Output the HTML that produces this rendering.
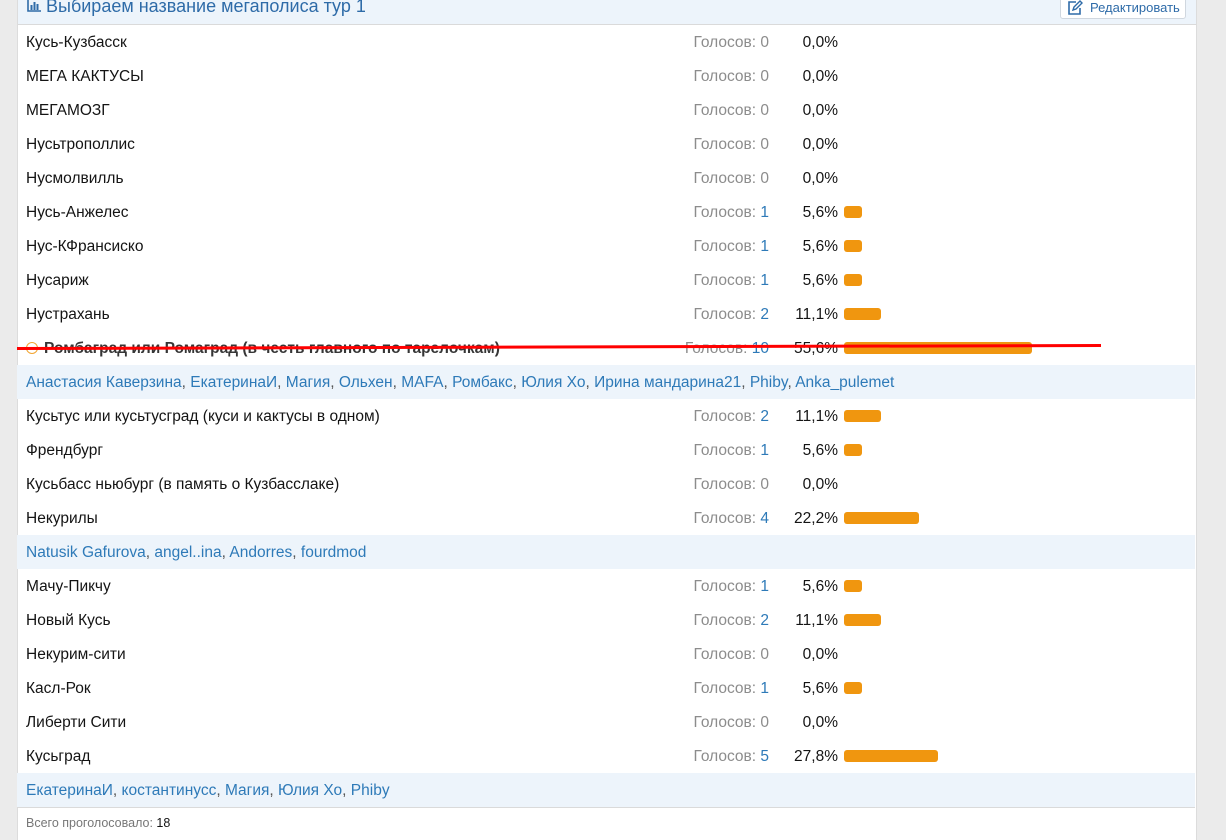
<!DOCTYPE html>
<html><head><meta charset="utf-8"><style>
body{margin:0;width:1226px;height:831px;background:#ebebeb;font-family:"Liberation Sans",sans-serif;font-size:15.5px;color:#141414;overflow:hidden;position:relative}
.panel{position:absolute;left:17px;top:-10px;width:1178px;height:850px;background:#fff;border-left:1px solid #dcdcdc;border-right:1px solid #dcdcdc}
.hdr{position:absolute;left:0;top:0;width:1178px;height:34px;background:#edf4fb;border-bottom:1px solid #dadada}
.hdr .t{position:absolute;left:9px;top:6px;font-size:18px;color:#2e6ba8}
.btn{position:absolute;left:1042px;top:6px;width:124px;height:21px;border:1px solid #d0d7df;border-radius:3px;background:#fff;color:#2e6ba8;font-size:13px;line-height:22px}
.row{position:absolute;left:0;width:1178px;height:34px;line-height:34px}
.row .n{position:absolute;left:9px}
.row .v{position:absolute;right:426px;color:#8c8c8c}
.row .v b{font-weight:normal;color:#2e7ab8}
.row .p{position:absolute;right:357px}
.row .bar{position:absolute;left:827px;top:9px;height:12px;background:#f0960f;border-radius:3px}
.vs{position:absolute;left:0;width:1178px;height:34px;line-height:34px;background:#edf4fb;color:#2e7ab8}
.vs span{padding-left:9px}
.vs i{font-style:normal;color:#555}
.foot{position:absolute;left:9px;font-size:12.5px;color:#777}
</style></head><body>
<div class="panel">
<div class="hdr"><div class="t"><svg width="14" height="13" viewBox="0 0 14 13" style="vertical-align:0"><path d="M1 0v12h13" stroke="#2e6ba8" stroke-width="1.6" fill="none"/><rect x="3.5" y="6" width="2" height="5" fill="#2e6ba8"/><rect x="6.5" y="3" width="2" height="8" fill="#2e6ba8"/><rect x="9.5" y="5" width="2" height="6" fill="#2e6ba8"/></svg> Выбираем название мегаполиса тур 1</div>
<div class="btn"><svg width="16" height="15" viewBox="0 0 16 15" style="position:absolute;left:6px;top:3px"><path d="M9 2H2v12h11V8" stroke="#2e6ba8" stroke-width="1.6" fill="none"/><path d="M6 10l1-3 6-6 2 2-6 6z" stroke="#2e6ba8" stroke-width="1.4" fill="none"/></svg><span style="position:absolute;left:29px">Редактировать</span></div>
</div>
</div>
<div id="rows" style="position:absolute;left:17px;top:0;width:1178px;height:831px"></div>
<div style="position:absolute;left:17px;top:347px;width:1084px;height:3px;background:#f00;transform:rotate(-0.16deg);transform-origin:0 50%"></div>
<script>
var d=[["Кусь-Кузбасск",0,"0,0%",0],["МЕГА КАКТУСЫ",0,"0,0%",0],["МЕГАМОЗГ",0,"0,0%",0],["Нусьтрополлис",0,"0,0%",0],["Нусмолвилль",0,"0,0%",0],["Нусь-Анжелес",1,"5,6%",18],["Нус-КФрансиско",1,"5,6%",18],["Нусариж",1,"5,6%",18],["Нустрахань",2,"11,1%",37],["Ромбаград или Ромаград (в честь главного по тарелочкам)",10,"55,6%",188,1],
["V","Анастасия Каверзина<i>, </i>ЕкатеринаИ<i>, </i>Магия<i>, </i>Ольхен<i>, </i>MAFA<i>, </i>Ромбакс<i>, </i>Юлия Хо<i>, </i>Ирина мандарина21<i>, </i>Phiby<i>, </i>Anka_pulemet"],
["Кусьтус или кусьтусград (куси и кактусы в одном)",2,"11,1%",37],["Френдбург",1,"5,6%",18],["Кусьбасс ньюбург (в память о Кузбасслаке)",0,"0,0%",0],["Некурилы",4,"22,2%",75],
["V","Natusik Gafurova<i>, </i>angel..ina<i>, </i>Andorres<i>, </i>fourdmod"],
["Мачу-Пикчу",1,"5,6%",18],["Новый Кусь",2,"11,1%",37],["Некурим-сити",0,"0,0%",0],["Касл-Рок",1,"5,6%",18],["Либерти Сити",0,"0,0%",0],["Кусьград",5,"27,8%",94],
["V","ЕкатеринаИ<i>, </i>костантинусс<i>, </i>Магия<i>, </i>Юлия Хо<i>, </i>Phiby"]];
var h="";d.forEach(function(r,i){var y=25+34*i;
if(r[0]=="V"){h+='<div class="vs" style="top:'+y+'px;line-height:36px"><span>'+r[1]+'</span></div>';return;}
var n=r[4]?'<b style="opacity:.85"><span style="display:inline-block;width:12px;height:12px;border:1.5px solid #f0960f;border-radius:50%;box-sizing:border-box;vertical-align:-1px;margin-right:6px"></span>'+r[0]+'</b>':r[0];
h+='<div class="row" style="top:'+y+'px;line-height:36px"><span class="n">'+n+'</span><span class="v">Голосов: '+(r[1]?'<b>'+r[1]+'</b>':r[1])+'</span><span class="p">'+r[2]+'</span>'+(r[3]?'<div class="bar" style="top:11px;width:'+r[3]+'px"></div>':'')+'</div>';});
h+='<div style="position:absolute;left:0;top:807px;width:1178px;border-top:1px solid #dadada"></div><div class="foot" style="top:816px">Всего проголосовало: <span style="color:#141414">18</span></div>';
document.getElementById("rows").innerHTML=h;
</script>
</body></html>
